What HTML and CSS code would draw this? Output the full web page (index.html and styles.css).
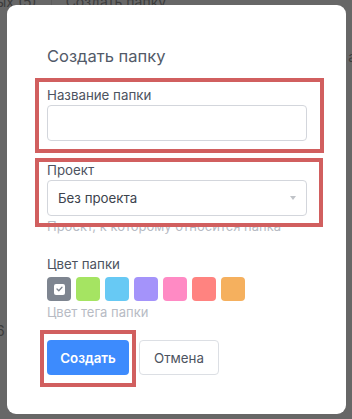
FILE: index.html
```html
<!DOCTYPE html>
<html lang="ru">
<head>
    <meta charset="UTF-8">
    <meta name="viewport" content="width=device-width, initial-scale=1.0">
    <title>Создать папку</title>
    <link rel="stylesheet" href="styles.css">
</head>
<body>
    <div class="page">
        <div class="page-top">
            <span class="crumb">ых (5)</span>
            <span class="divider"></span>
            <span class="crumb">Создать папку</span>
        </div>
        <span class="page-right">а</span>
        <span class="page-left">6</span>
    </div>

    <div class="modal">
        <h2 class="modal-title">Создать папку</h2>

        <div class="form-group">
            <label for="folderName">Название папки</label>
            <input type="text" id="folderName">
        </div>

        <div class="form-group">
            <label for="project">Проект</label>
            <div class="select">
                <span>Без проекта</span>
                <span class="arrow"></span>
            </div>
            <p class="hint">Проект, к которому относится папка</p>
        </div>

        <div class="form-group colors">
            <label>Цвет папки</label>
            <div class="swatches">
                <span class="swatch gray"><span class="check">
                    <svg width="7" height="6" viewBox="0 0 7 6"><path d="M1 3 L2.8 4.8 L6 1.2" fill="none" stroke="#7e8590" stroke-width="1.3" stroke-linecap="round" stroke-linejoin="round"/></svg>
                </span></span>
                <span class="swatch green"></span>
                <span class="swatch blue"></span>
                <span class="swatch purple"></span>
                <span class="swatch pink"></span>
                <span class="swatch red"></span>
                <span class="swatch orange"></span>
            </div>
            <p class="hint">Цвет тега папки</p>
        </div>

        <div class="actions">
            <button class="btn btn-primary">Создать</button>
            <button class="btn btn-default">Отмена</button>
        </div>

        <div class="mark mark-name"></div>
        <div class="mark mark-project"></div>
        <div class="mark mark-submit"></div>
    </div>
</body>
</html>
```

FILE: styles.css
```css
* {
    box-sizing: border-box;
}

body {
    margin: 0;
    width: 352px;
    height: 419px;
    overflow: hidden;
    background-color: #676767;
    font-family: Inter, "Noto Sans", sans-serif;
    position: relative;
}

.page {
    height: 419px;
    position: relative;
    color: #3c3c3c;
    font-size: 14px;
}

.page-top {
    display: flex;
    align-items: center;
    gap: 14px;
    margin-top: -8px;
    height: 18px;
}

.page-top .crumb:first-child {
    margin-left: -4px;
}

.divider {
    width: 1px;
    height: 18px;
    background-color: #5c5c5c;
}

.page-right {
    position: absolute;
    right: -4px;
    top: 56px;
}

.page-left {
    position: absolute;
    left: -4px;
    top: 330px;
}

.modal {
    position: absolute;
    left: 7px;
    top: 5px;
    width: 339px;
    height: 409px;
    background-color: white;
    border-radius: 9px;
    padding: 41px 39px 0 40px;
}

.modal-title {
    margin: 0;
    font-size: 16.5px;
    line-height: 20px;
    font-weight: 400;
    color: #525a68;
}

.form-group {
    margin-top: 21px;
}

label {
    display: block;
    font-size: 13.3px;
    line-height: 16px;
    color: #4d5360;
    margin-bottom: 2px;
}

input {
    display: block;
    width: 260px;
    height: 36px;
    border: 1px solid #d3d6dc;
    border-radius: 4px;
    font-family: inherit;
}

.select {
    width: 260px;
    height: 36px;
    border: 1px solid #d3d6dc;
    border-radius: 4px;
    display: flex;
    align-items: center;
    justify-content: space-between;
    padding: 0 10px;
    font-size: 13.3px;
    color: #3d434e;
}

.arrow {
    width: 0;
    height: 0;
    border-left: 3px solid transparent;
    border-right: 3px solid transparent;
    border-top: 4px solid #c0c3c8;
}

.hint {
    margin: 3px 0 0;
    font-size: 13px;
    line-height: 14px;
    color: #b7bbc4;
}

.colors {
    margin-top: 23px;
}

.colors label {
    margin-bottom: 5px;
}

.swatches {
    display: flex;
    gap: 5px;
}

.swatch {
    width: 24px;
    height: 24px;
    border-radius: 4px;
    display: flex;
    align-items: center;
    justify-content: center;
}

.check {
    width: 11px;
    height: 11px;
    background-color: white;
    border-radius: 2px;
    display: flex;
    align-items: center;
    justify-content: center;
}

.gray { background-color: #7e8590; }
.green { background-color: #a5e462; }
.blue { background-color: #67c9f4; }
.purple { background-color: #a493fa; }
.pink { background-color: #ff8ac4; }
.red { background-color: #ff8380; }
.orange { background-color: #f5b05e; }

.colors .hint {
    margin-top: 4px;
}

.actions {
    display: flex;
    gap: 10px;
    margin-top: 21px;
}

.btn {
    height: 35px;
    border-radius: 4px;
    font-family: inherit;
    font-size: 13.3px;
    cursor: pointer;
}

.btn-primary {
    width: 82px;
    background-color: #3d8bfd;
    border: none;
    color: white;
    font-weight: 600;
}

.btn-default {
    width: 80px;
    background-color: white;
    border: 1px solid #dcdfe4;
    color: #4d5360;
}

.mark {
    position: absolute;
    border: 4px solid #d15f5f;
}

.mark-name {
    left: 28px;
    top: 73px;
    width: 289px;
    height: 75px;
}

.mark-project {
    left: 28px;
    top: 153px;
    width: 288px;
    height: 69px;
}

.mark-submit {
    left: 33px;
    top: 325px;
    width: 96px;
    height: 57px;
}
```
